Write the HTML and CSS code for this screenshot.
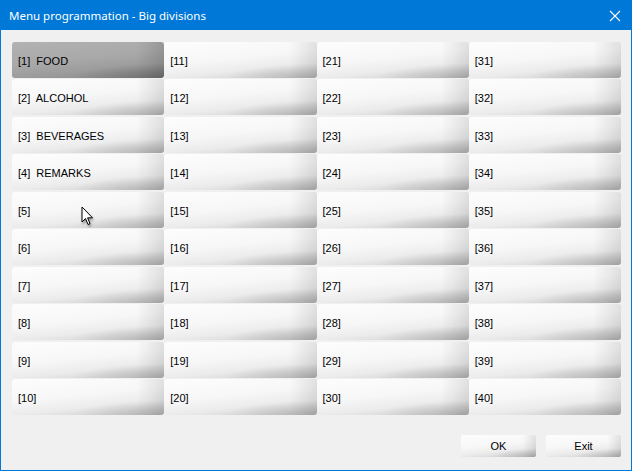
FILE: index.html
```html
<!DOCTYPE html>
<html>
<head>
<meta charset="utf-8">
<link rel="stylesheet" href="styles.css">
</head>
<body>
<div class="window">
  <div class="titlebar">
    <span class="title">Menu programmation - Big divisions</span>
    <svg class="close" width="12" height="12" viewBox="0 0 12 12"><path d="M1 1 L11 11 M11 1 L1 11" stroke="#fff" stroke-width="1.1" fill="none"/></svg>
  </div>
  <div class="content">
    <div class="grid">
      <div class="btn sel">[1]  FOOD</div>
      <div class="btn">[11]</div>
      <div class="btn">[21]</div>
      <div class="btn">[31]</div>
      <div class="btn">[2]  ALCOHOL</div>
      <div class="btn">[12]</div>
      <div class="btn">[22]</div>
      <div class="btn">[32]</div>
      <div class="btn">[3]  BEVERAGES</div>
      <div class="btn">[13]</div>
      <div class="btn">[23]</div>
      <div class="btn">[33]</div>
      <div class="btn">[4]  REMARKS</div>
      <div class="btn">[14]</div>
      <div class="btn">[24]</div>
      <div class="btn">[34]</div>
      <div class="btn">[5]</div>
      <div class="btn">[15]</div>
      <div class="btn">[25]</div>
      <div class="btn">[35]</div>
      <div class="btn">[6]</div>
      <div class="btn">[16]</div>
      <div class="btn">[26]</div>
      <div class="btn">[36]</div>
      <div class="btn">[7]</div>
      <div class="btn">[17]</div>
      <div class="btn">[27]</div>
      <div class="btn">[37]</div>
      <div class="btn">[8]</div>
      <div class="btn">[18]</div>
      <div class="btn">[28]</div>
      <div class="btn">[38]</div>
      <div class="btn">[9]</div>
      <div class="btn">[19]</div>
      <div class="btn">[29]</div>
      <div class="btn">[39]</div>
      <div class="btn">[10]</div>
      <div class="btn">[20]</div>
      <div class="btn">[30]</div>
      <div class="btn">[40]</div>
    </div>
    <div class="actions">
      <div class="btn small">OK</div>
      <div class="btn small">Exit</div>
    </div>
    <svg class="cursor" width="14" height="22" viewBox="0 0 14 22">
      <path d="M1 1 L1 16 L4.5 12.5 L7 18.5 L9 17.6 L6.6 11.8 L11.5 11.8 Z" fill="#fff" stroke="#000" stroke-width="1" stroke-linejoin="miter"/>
    </svg>
  </div>
</div>
</body>
</html>
```
FILE: styles.css
```css
html, body {
  margin: 0;
  padding: 0;
  background: #f0f0f0;
}
.window {
  width: 632px;
  height: 471px;
  box-sizing: border-box;
  border: 1px solid #0078d7;
  background: #f0f0f0;
  display: flex;
  flex-direction: column;
  overflow: hidden;
}
.titlebar {
  height: 30px;
  flex: none;
  background: #0078d7;
  display: flex;
  align-items: center;
  justify-content: space-between;
  padding: 1px 10px 0 8px;
  margin-top: -1px;
  box-sizing: border-box;
}
.title {
  color: #fff;
  font-family: "Noto Sans", "Open Sans", sans-serif;
  font-size: 11.5px;
}
.close { display: block; }
.content {
  position: relative;
  flex: 1;
  padding: 12px 10px 0 11px;
  display: flex;
  flex-direction: column;
}
.grid {
  display: grid;
  grid-template-columns: repeat(4, 152.25px);
  grid-template-rows: repeat(10, 36px);
  row-gap: 1.45px;
}
.btn {
  font-family: "Liberation Sans", Arial, sans-serif;
  font-size: 11px;
  color: #000;
  white-space: pre;
  display: flex;
  align-items: center;
  padding: 2px 0 0 6px;
  border-radius: 3px;
  box-sizing: border-box;
  background:
    radial-gradient(ellipse 60% 40% at 100% 100%, rgba(120,120,120,0.35), rgba(120,120,120,0) 100%),
    linear-gradient(to right, rgba(0,0,0,0) 82%, rgba(0,0,0,0.10) 100%),
    linear-gradient(174deg, #fdfdfd 0%, #f7f7f7 45%, #ebebeb 70%, #c9c9c9 100%);
}
.btn.sel {
  background:
    radial-gradient(ellipse 60% 40% at 100% 100%, rgba(60,60,60,0.35), rgba(60,60,60,0) 100%),
    linear-gradient(to right, rgba(0,0,0,0) 82%, rgba(0,0,0,0.12) 100%),
    linear-gradient(174deg, #b2b2b2 0%, #a9a9a9 45%, #9c9c9c 70%, #858585 100%);
}
.actions {
  display: flex;
  justify-content: flex-end;
  gap: 10px;
  margin-top: 20px;
}
.btn.small {
  width: 75px;
  height: 22px;
  padding: 1px 0 0 0;
  justify-content: center;
  border-radius: 2px;
}
.cursor {
  position: absolute;
  left: 80px;
  top: 176px;
  filter: drop-shadow(1px 2px 1px rgba(0,0,0,0.35));
}
```
